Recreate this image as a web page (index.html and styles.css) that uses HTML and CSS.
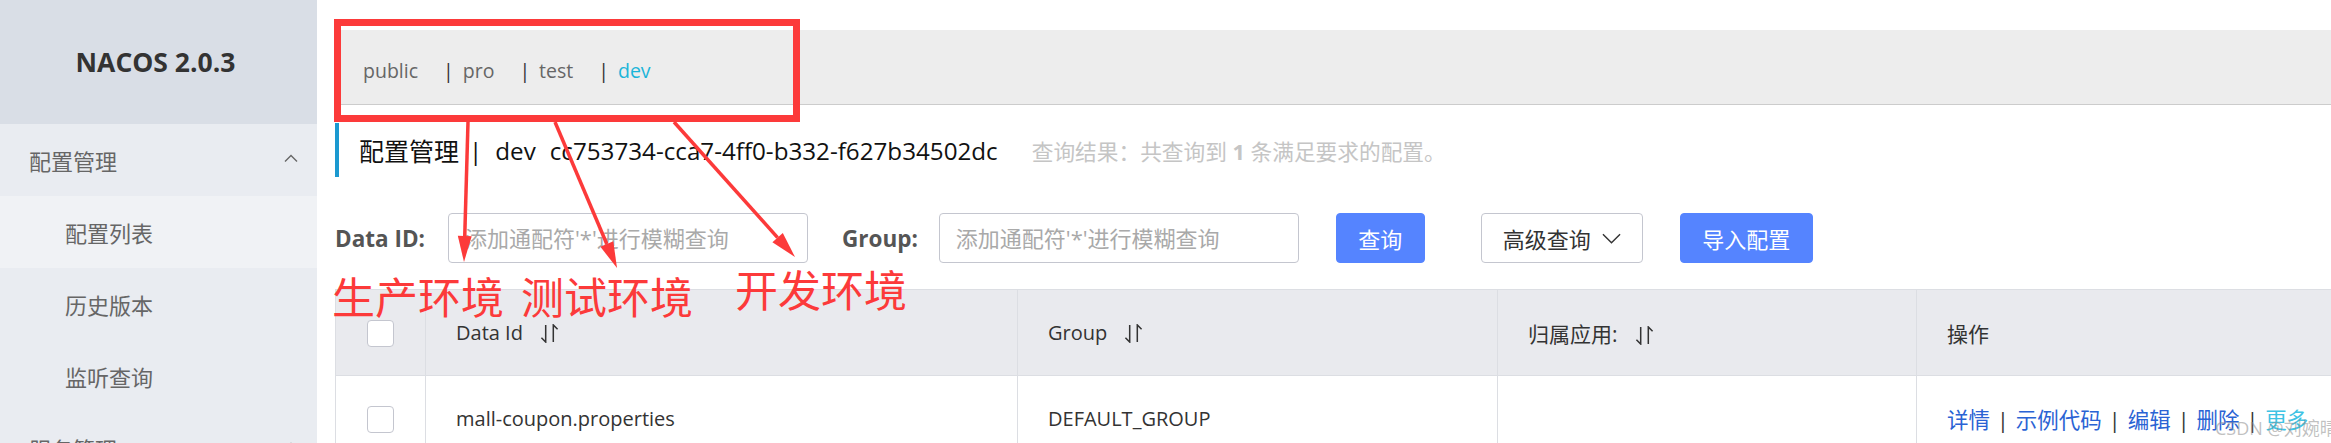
FILE: index.html
```html
<!DOCTYPE html>
<html lang="zh-CN">
<head>
<meta charset="utf-8">
<title>Nacos 配置管理</title>
<link rel="stylesheet" href="styles.css">
</head>
<body>
<div class="app">
  <aside class="sidebar">
    <div class="logo">NACOS 2.0.3</div>
    <nav class="menu">
      <div class="menu-title"><span>配置管理</span><svg class="caret" viewBox="0 0 14 8"><path d="M1 7.5 L7 1.5 L13 7.5"/></svg></div>
      <a class="menu-item is-active">配置列表</a>
      <a class="menu-item">历史版本</a>
      <a class="menu-item">监听查询</a>
      <div class="menu-title"><span>服务管理</span><svg class="caret" viewBox="0 0 14 8"><path d="M1 7.5 L7 1.5 L13 7.5"/></svg></div>
    </nav>
  </aside>
  <main class="main">
    <div class="ns-bar">
      <span class="ns">public</span><span class="ns-sep">|</span><span class="ns">pro</span><span class="ns-sep">|</span><span class="ns">test</span><span class="ns-sep">|</span><span class="ns is-current">dev</span>
    </div>
    <div class="page-title">
      <span class="pt-name">配置管理</span><span class="pt-sep">|</span><span class="pt-ns">dev</span><span class="pt-id">cc753734-cca7-4ff0-b332-f627b34502dc</span><span class="pt-hint">查询结果：共查询到 <strong>1</strong> 条满足要求的配置。</span>
    </div>
    <div class="filters">
      <label class="f-label">Data ID:</label>
      <input class="f-input" type="text" placeholder="添加通配符'*'进行模糊查询">
      <label class="f-label f-label-group">Group:</label>
      <input class="f-input" type="text" placeholder="添加通配符'*'进行模糊查询">
      <button class="btn btn-primary btn-query">查询</button>
      <button class="btn btn-normal btn-adv">高级查询<svg class="chev" viewBox="0 0 20 11"><path d="M1 1 L10 10 L19 1"/></svg></button>
      <button class="btn btn-primary btn-import">导入配置</button>
    </div>
    <table class="grid">
      <colgroup>
        <col class="col-check">
        <col class="col-id">
        <col class="col-group">
        <col class="col-app">
        <col class="col-op">
      </colgroup>
      <thead>
        <tr>
          <th class="c-check"><input class="cb" type="checkbox"></th>
          <th>Data Id<svg class="sort" viewBox="0 0 20 20"><path d="M6 1 V19 L1.5 14.5 M14 19 V1 L18.5 5.5"/></svg></th>
          <th>Group<svg class="sort" viewBox="0 0 20 20"><path d="M6 1 V19 L1.5 14.5 M14 19 V1 L18.5 5.5"/></svg></th>
          <th class="cjk">归属应用:<svg class="sort" viewBox="0 0 20 20"><path d="M6 1 V19 L1.5 14.5 M14 19 V1 L18.5 5.5"/></svg></th>
          <th class="cjk">操作</th>
        </tr>
      </thead>
      <tbody>
        <tr>
          <td class="c-check"><input class="cb" type="checkbox"></td>
          <td>mall-coupon.properties</td>
          <td>DEFAULT_GROUP</td>
          <td></td>
          <td class="cjk ops"><a class="op-link">详情</a><span class="op-sep">|</span><a class="op-link">示例代码</a><span class="op-sep">|</span><a class="op-link">编辑</a><span class="op-sep">|</span><a class="op-link">删除</a><span class="op-sep">|</span><a class="op-link op-more">更多</a></td>
        </tr>
      </tbody>
    </table>
  </main>
</div>

<div class="annot">
  <div class="mark-box"></div>
  <svg class="arrows" viewBox="0 0 2331 443">
    <line x1="468" y1="122" x2="464.7" y2="238"/>
    <polygon points="464,262 471.7,236.2 457.8,235.8"/>
    <line x1="555" y1="122" x2="606.8" y2="244"/>
    <polygon points="617,268 613.3,241.3 600.4,246.8"/>
    <line x1="674" y1="122" x2="777.6" y2="237.6"/>
    <polygon points="795,257 782.8,232.9 772.4,242.3"/>
  </svg>
  <span class="mark-label ml-1">生产环境</span>
  <span class="mark-label ml-2">测试环境</span>
  <span class="mark-label ml-3">开发环境</span>
  <span class="watermark">CSDN @刘婉晴</span>
</div>
</body>
</html>
```

FILE: styles.css
```css
html, body {
  margin: 0;
  padding: 0;
}
body {
  width: 2331px;
  height: 443px;
  overflow: hidden;
  position: relative;
  background: #fff;
  color: #333;
  font-family: "Open Sans", "Noto Sans CJK SC", sans-serif;
}
.app {
  display: flex;
  height: 443px;
}

/* sidebar */
.sidebar {
  width: 317px;
  flex: none;
  background: #e9ecf1;
}
.logo {
  height: 124px;
  background: #d9dee6;
  display: flex;
  align-items: center;
  justify-content: center;
  padding-right: 6px;
  box-sizing: border-box;
  font-weight: 700;
  font-size: 26.5px;
  color: #333;
}
.menu-title {
  height: 72px;
  display: flex;
  align-items: center;
  justify-content: space-between;
  padding: 0 19px 0 29px;
  font-size: 22px;
  color: #666;
}
.caret {
  width: 14px;
  height: 8px;
  margin-top: -4px;
  fill: none;
  stroke: #666;
  stroke-width: 1.4;
}
.menu-item {
  display: flex;
  align-items: center;
  height: 72px;
  padding-left: 65px;
  font-size: 22px;
  color: #666;
}
.menu-item.is-active {
  background: #f0f2f5;
}

/* main */
.main {
  flex: 1;
  min-width: 0;
  overflow: hidden;
  padding: 30px 0 0 18px;
}
.ns-bar {
  height: 75px;
  box-sizing: border-box;
  background: #ededed;
  border-bottom: 1px solid #ccc;
  padding: 27px 0 0 28px;
  font-size: 19.5px;
  line-height: 28px;
  color: #666;
  white-space: nowrap;
}
.ns-sep {
  color: #333;
  margin: 0 9px 0 25px;
}
.ns.is-current {
  color: #1cb5d9;
}

.page-title {
  margin-top: 18px;
  height: 54px;
  border-left: 4px solid #1b99d0;
  padding-left: 20px;
  display: flex;
  align-items: center;
  white-space: nowrap;
  font-size: 24.2px;
  color: #111;
}
.pt-name {
  font-size: 25px;
}
.pt-sep {
  margin: 0 13px 0 10px;
}
.pt-ns {
  margin-right: 14px;
}
.pt-hint {
  margin-left: 34px;
  font-size: 21.7px;
  color: #c5c5c5;
}

/* filters */
.filters {
  margin-top: 36px;
  height: 50px;
  display: flex;
  align-items: center;
}
.f-label {
  font-weight: 700;
  font-size: 22.5px;
  color: #555;
  margin-right: 23px;
}
.f-label-group {
  margin-left: 34px;
  margin-right: 21px;
}
.f-input {
  width: 360px;
  height: 50px;
  box-sizing: border-box;
  border: 1px solid #c4c6cf;
  border-radius: 4px;
  padding: 0 16px;
  font: inherit;
  font-size: 22px;
  color: #333;
  outline: none;
  background: #fff;
}
.f-input::placeholder {
  color: #a9a9a9;
}
.btn {
  height: 50px;
  box-sizing: border-box;
  border-radius: 4px;
  border: 1px solid transparent;
  font: inherit;
  font-size: 22px;
  padding: 0;
  display: inline-flex;
  align-items: center;
  justify-content: center;
}
.btn-primary {
  background: #5584ff;
  border-color: #5584ff;
  color: #fff;
}
.btn-query {
  margin-left: 37px;
  width: 89px;
}
.btn-adv {
  margin-left: 56px;
  width: 162px;
  background: #fff;
  border-color: #c4c6cf;
  color: #333;
  gap: 11px;
}
.chev {
  width: 19px;
  height: 11px;
  fill: none;
  stroke: #333;
  stroke-width: 1.5;
}
.btn-import {
  margin-left: 37px;
  width: 133px;
}

/* table */
.grid {
  margin-top: 26px;
  border-collapse: collapse;
  table-layout: fixed;
  width: 2100px;
}
.col-check { width: 90px; }
.col-id { width: 592px; }
.col-group { width: 480px; }
.col-app { width: 419px; }
.col-op { width: 519px; }
.grid th,
.grid td {
  border: 1px solid #dcdee3;
  padding: 0 0 0 30px;
  text-align: left;
  font-weight: 400;
  font-size: 20px;
  color: #333;
  white-space: nowrap;
  height: 86px;
  box-sizing: border-box;
}
.grid th {
  background: #e9eaee;
}
.grid .cjk {
  font-size: 21px;
}
.grid .ops {
  font-size: 21.5px;
}
.grid .c-check {
  padding: 0;
  text-align: center;
}
.cb {
  appearance: none;
  -webkit-appearance: none;
  width: 27px;
  height: 27px;
  box-sizing: border-box;
  border: 1px solid #c4c6cf;
  border-radius: 4px;
  background: #fff;
  margin: 0;
  vertical-align: middle;
}
.sort {
  width: 19px;
  height: 19px;
  margin-left: 17px;
  vertical-align: -3px;
  fill: none;
  stroke: #333;
  stroke-width: 1.6;
}
.op-link {
  color: #2a63d4;
}
.op-more {
  color: #3ec3e4;
}
.op-sep {
  color: #333;
  margin: 0 7px;
}

/* annotations */
.annot {
  position: absolute;
  left: 0;
  top: 0;
  width: 2331px;
  height: 443px;
  pointer-events: none;
}
.mark-box {
  position: absolute;
  left: 334px;
  top: 19px;
  width: 466px;
  height: 103px;
  box-sizing: border-box;
  border: 7px solid #fc3a3a;
}
.arrows {
  position: absolute;
  left: 0;
  top: 0;
  width: 2331px;
  height: 443px;
}
.arrows line {
  stroke: #fc3a3a;
  stroke-width: 3.5;
}
.arrows polygon {
  fill: #fc3a3a;
}
.mark-label {
  position: absolute;
  font-family: "Noto Sans CJK SC", sans-serif;
  font-size: 43px;
  line-height: 43px;
  color: #fc3a3a;
  white-space: nowrap;
}
.ml-1 { left: 332px; top: 274px; }
.ml-2 { left: 521px; top: 274px; }
.ml-3 { left: 735px; top: 267px; }
.watermark {
  position: absolute;
  left: 2215px;
  top: 414px;
  font-size: 18px;
  color: rgba(140, 140, 140, 0.55);
  white-space: nowrap;
}
```
